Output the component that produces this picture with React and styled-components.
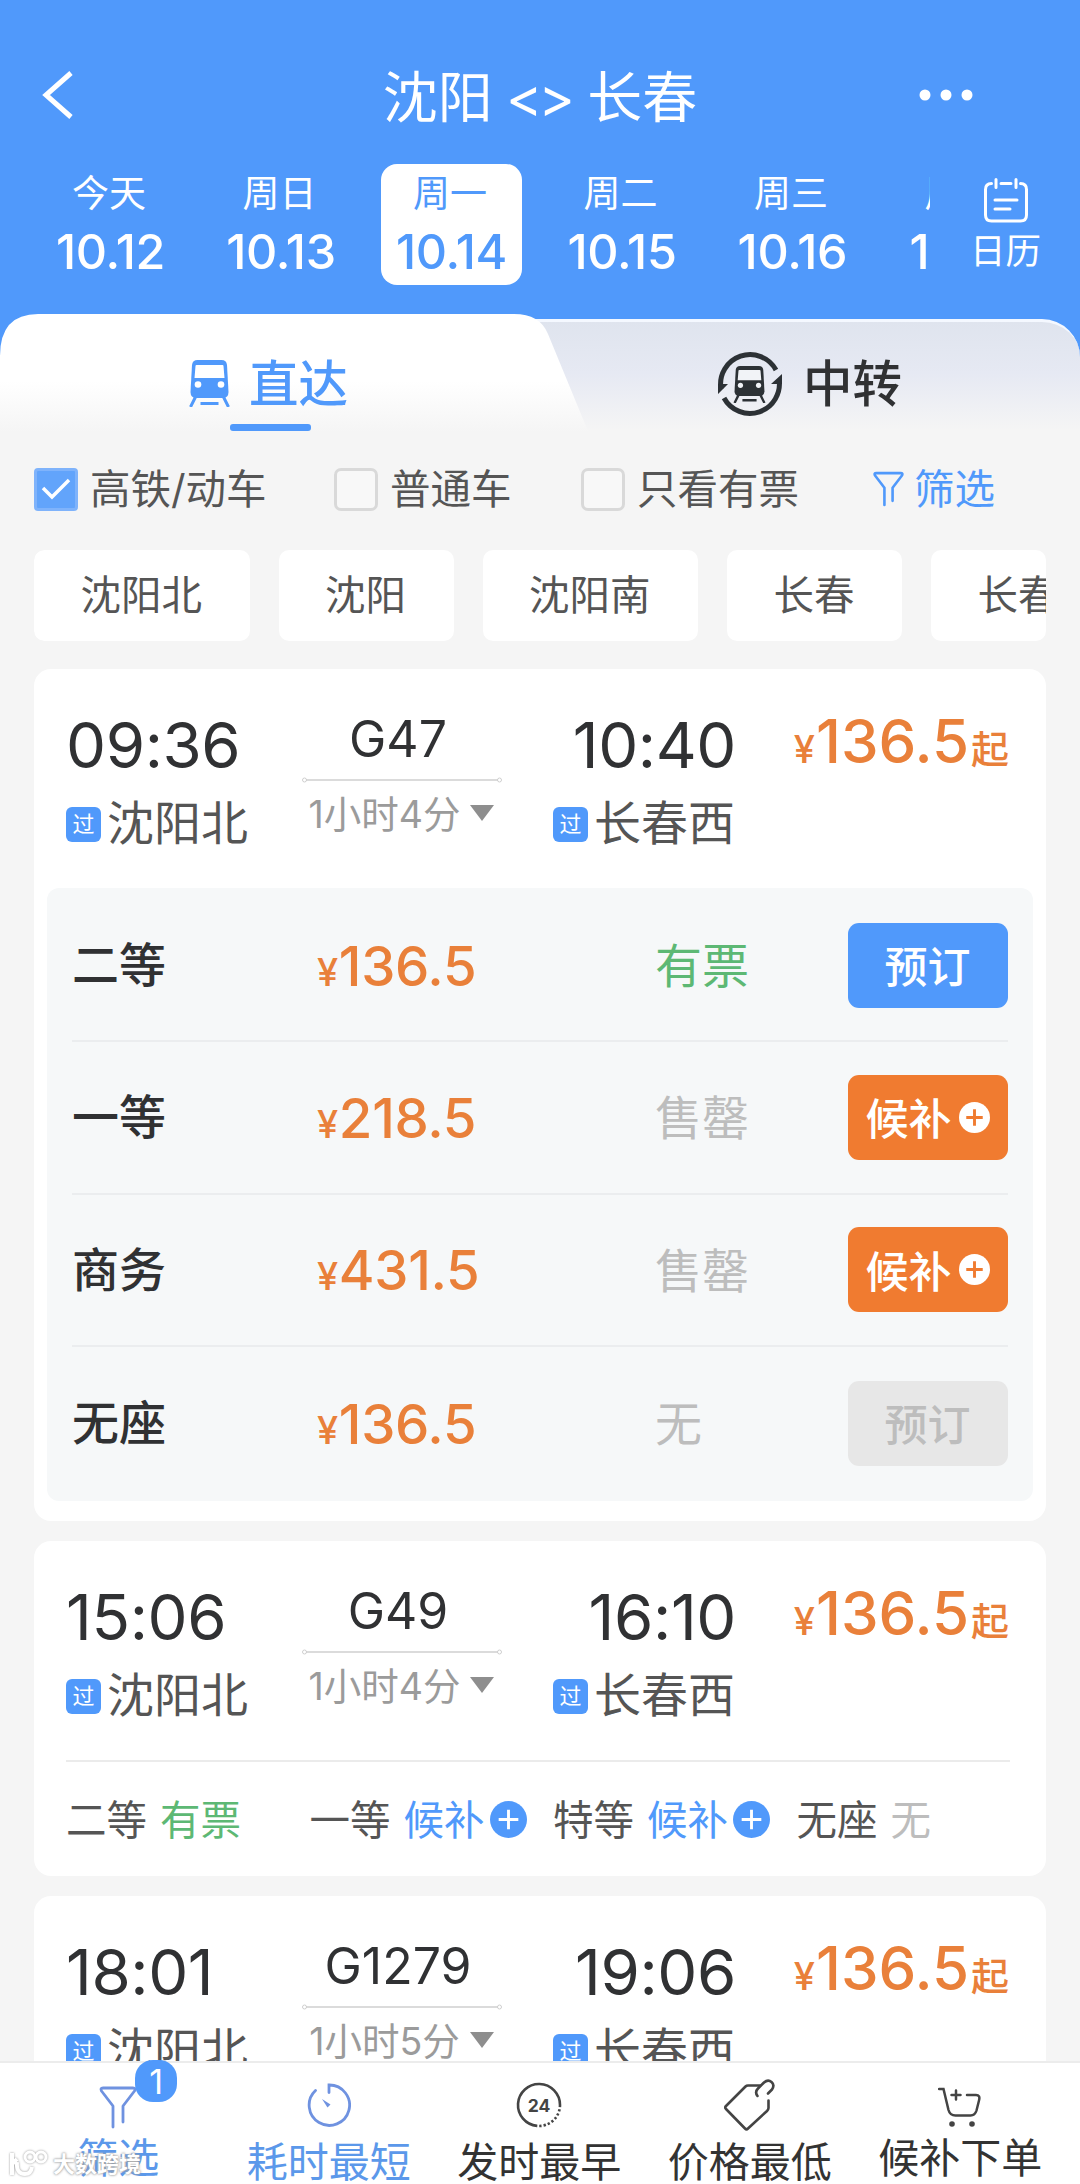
import { useState } from "react";
import styled, { createGlobalStyle, css } from "styled-components";

const GlobalStyle = createGlobalStyle`
  :root {
    --color-blue: #5099fb;
    --color-orange: #e9803a;
    --color-green: #5db874;
    --color-grey-50: #f5f5f5;
    --color-grey-300: #bdbdbd;
    --color-grey-400: #9b9b9b;
    --color-grey-600: #555;
    --color-grey-800: #303133;
  }

  * {
    box-sizing: border-box;
    margin: 0;
    padding: 0;
  }

  body {
    font-family: Inter, "Noto Sans CJK SC", sans-serif;
    background: var(--color-grey-50);
    color: var(--color-grey-800);
  }

  button {
    font: inherit;
    border: none;
    background: none;
    cursor: pointer;
  }
`;

const Screen = styled.div`
  display: flex;
  flex-direction: column;
  width: 1080px;
  height: 2184px;
  overflow: hidden;
  background: var(--color-grey-50);
`;

const Header = styled.header`
  flex: none;
  height: 314px;
  padding-top: 55px;
  background: var(--color-blue);
  color: #fff;
`;

const TitleBar = styled.div`
  display: grid;
  grid-template-columns: 200px 1fr 200px;
  align-items: center;
  height: 80px;
  padding: 0 42px;
`;

const Title = styled.h1`
  padding-top: 3px;
  font-size: 55px;
  font-weight: 400;
  line-height: 76px;
  text-align: center;
  white-space: pre;
`;

const Arrows = styled.span`
  letter-spacing: -4px;
  margin: 0 1px 0 -2px;
`;

const MoreIcon = styled.svg`
  justify-self: end;
  margin-right: 65px;
`;

const DateBar = styled.div`
  display: flex;
  margin-top: 29px;
`;

const DateStrip = styled.div`
  display: flex;
  gap: 29.5px;
  width: 930px;
  padding-left: 40px;
  overflow: hidden;
`;

const DateItem = styled.button`
  flex: none;
  width: 141px;
  height: 121px;
  padding-top: 2px;
  border-radius: 16px;
  color: ${(props) => (props.$active ? "var(--color-blue)" : "#fff")};
  background: ${(props) => (props.$active ? "#fff" : "transparent")};
`;

const Weekday = styled.div`
  margin-left: -3px;
  font-size: 37px;
  line-height: 52px;
`;

const Day = styled.div`
  margin: 0 -10px;
  font-size: 48.5px;
  font-weight: 500;
  line-height: 64px;
  letter-spacing: -0.3px;
`;

const Calendar = styled.button`
  flex: 1;
  display: flex;
  flex-direction: column;
  align-items: center;
  gap: 5px;
  padding: 14px 0 0 1px;
  color: #fff;
  font-size: 35.5px;
  line-height: 48px;
`;

const Tabs = styled.div`
  flex: none;
  display: flex;
  height: 122px;
  background: linear-gradient(var(--color-blue) 50px, var(--color-grey-50) 50px);
`;

const DirectTab = styled.div`
  position: relative;
  z-index: 1;
  flex: none;
  width: 600px;
  padding-top: 34px;
  background: linear-gradient(#fff 55%, var(--color-grey-50) 97%);
  color: var(--color-blue);
  clip-path: path(
    "M0 122 V42 Q0 0 38 0 H514 Q540 0 548 20 L590 122 Z"
  );

  &::after {
    content: "";
    display: block;
    width: 81px;
    height: 7px;
    margin: 5px 0 0 230px;
    border-radius: 3px;
    background: var(--color-blue);
  }
`;

const TransferTab = styled.div`
  flex: 1;
  margin: 5px 0 0 -80px;
  border-top: 3px solid #f4f8ff;
  border-radius: 0 38px 0 0;
  padding-top: 26px;
  background: linear-gradient(#dfe4ee, #e6e9f3 45%, var(--color-grey-50) 95%);
`;

const TabLabel = styled.div`
  display: flex;
  align-items: center;
  height: 71px;
  padding-left: ${(props) => props.$indent}px;
  gap: ${(props) => props.$gap}px;
  font-size: 49.5px;
  font-weight: 500;
`;

const TabText = styled.span`
  padding-bottom: 6px;
`;

const Filters = styled.div`
  flex: none;
  display: flex;
  align-items: center;
  height: 106px;
  padding-left: 34px;
  color: var(--color-grey-600);
  font-size: 40.5px;
`;

const FilterText = styled.span`
  padding-bottom: 5px;
`;

const Check = styled.label`
  display: flex;
  align-items: center;
  gap: 12px;
  width: ${(props) => props.$width}px;
  white-space: nowrap;
`;

const Box = styled.span`
  display: grid;
  place-items: center;
  width: 44px;
  height: 43px;
  border: 3px solid ${(props) => (props.$on ? "#7fb3fb" : "#d9d9d9")};
  border-radius: ${(props) => (props.$on ? 4 : 7)}px;
  background: ${(props) => (props.$on ? "#62a4fb" : "#f8f8f8")};
`;

const FilterLink = styled.button`
  display: flex;
  align-items: center;
  gap: 10px;
  color: var(--color-blue);
`;

const Chips = styled.div`
  flex: none;
  display: flex;
  gap: 29px;
  margin: 8px 34px 0;
  overflow: hidden;
  border-radius: 10px;
`;

const Chip = styled.button`
  flex: none;
  height: 91px;
  padding: 0 47.5px 0 46.5px;
  border-radius: 10px;
  background: #fff;
  color: var(--color-grey-600);
  font-size: 40.5px;
  line-height: 91px;
`;

const List = styled.main`
  flex: 1;
  min-height: 0;
  display: flex;
  flex-direction: column;
  gap: 20.5px;
  padding: 28px 34px 0;
  overflow: hidden;
`;

const Card = styled.article`
  flex: none;
  padding-bottom: ${(props) => (props.$open ? 19.5 : 0)}px;
  border-radius: 17px;
  background: #fff;
`;

const TripHead = styled.div`
  display: grid;
  grid-template-columns: 236px 200px 234px 1fr;
  height: 219px;
  padding: 36px 37px 0 32px;
`;

const Stop = styled.div`
  display: flex;
  flex-direction: column;
  align-items: ${(props) => (props.$end ? "flex-end" : "flex-start")};
`;

const Time = styled.div`
  font-size: 63.5px;
  font-weight: 425;
  line-height: 80px;
  letter-spacing: -0.4px;
`;

const Station = styled.div`
  display: flex;
  align-items: center;
  gap: 6px;
  height: 77px;
  padding-right: 1px;
  color: var(--color-grey-600);
  font-size: 47px;
`;

const StationName = styled.span`
  padding-bottom: 9px;
`;

const PassBadge = styled.span`
  width: 35px;
  height: 35px;
  margin-top: 1px;
  border-radius: 6px;
  background: var(--color-blue);
  color: #fff;
  font-size: 22px;
  line-height: 35px;
  text-align: center;
`;

const Middle = styled.div`
  display: flex;
  flex-direction: column;
  align-items: center;
`;

const TrainNo = styled.div`
  margin: 0 8px 2px 0;
  font-size: 50px;
  line-height: 69px;
`;

const Duration = styled.div`
  display: flex;
  align-items: center;
  gap: 10px;
  height: 46px;
  margin: 4px 1px 0 0;
  color: var(--color-grey-400);
  font-size: 37.5px;
  white-space: nowrap;
`;

const Triangle = styled.i`
  margin-top: 4px;
  border: 12px solid transparent;
  border-top: 16px solid #8e8e8e;
  border-bottom: 0;
`;

const FromPrice = styled.div`
  justify-self: end;
  color: var(--color-orange);
  font-size: 60px;
  font-weight: 500;
  line-height: 73px;
  white-space: nowrap;
`;

const Yen = styled.span`
  margin-right: 1px;
  font-size: 38px;
`;

const From = styled.span`
  margin-left: 2px;
  font-size: 38px;
`;

const SeatPanel = styled.div`
  margin: 0 13px;
  padding: 2px 25px;
  border-radius: 12px;
  background: #f6f8f9;
`;

const SeatRow = styled.div`
  display: grid;
  grid-template-columns: 245px 338px 1fr 160px;
  align-items: center;
  height: 152.3px;
  font-size: 47px;

  &:not(:last-child) {
    border-bottom: 2px solid #ebedef;
  }
`;

const SeatName = styled.div`
  font-weight: 500;
  padding-bottom: 7px;
`;

const SeatPrice = styled.div`
  padding-top: 1px;
  color: var(--color-orange);
  font-size: 54.5px;
  font-weight: 500;
  letter-spacing: -0.3px;
`;

const statusColors = {
  有票: "var(--color-green)",
  候补: "var(--color-blue)",
};

const Status = styled.span`
  padding-bottom: ${(props) => props.$raise || 0}px;
  color: ${(props) => statusColors[props.$status] || "var(--color-grey-300)"};
`;

const variations = {
  book: css`
    background: var(--color-blue);
    color: #fff;
  `,
  wait: css`
    background: #f07b30;
    color: #fff;
  `,
  disabled: css`
    background: #e7e7e7;
    color: var(--color-grey-300);
  `,
};

const SeatButton = styled.button`
  display: flex;
  align-items: center;
  justify-content: center;
  gap: 7px;
  height: 85px;
  padding-right: 1px;
  border-radius: 11px;
  font-size: 43px;
  font-weight: 500;
  ${(props) => variations[props.$variation]}
`;

const ButtonText = styled.span`
  padding-bottom: 2px;
`;

const Summary = styled.div`
  display: grid;
  grid-template-columns: repeat(4, 243.5px);
  align-items: center;
  height: 115.5px;
  margin: 0 36px 0 32px;
  border-top: 2px solid #ebebeb;
  font-size: 40.5px;
`;

const SummaryItem = styled.div`
  display: flex;
  align-items: center;
  gap: 13px;
  padding-bottom: 2px;
  color: var(--color-grey-600);
  white-space: nowrap;
`;

const PlusWrap = styled.span`
  display: flex;
  margin: 3px 0 0 -8px;
  color: var(--color-blue);
`;

const Footer = styled.footer`
  position: relative;
  flex: none;
  display: grid;
  grid-template-columns: repeat(5, 210.5px);
  height: 123px;
  padding-left: 13px;
  border-top: 2px solid #ececec;
  background: #fff;
`;

const SortItem = styled.button`
  display: flex;
  flex-direction: column;
  align-items: center;
  padding-top: 14px;
  color: ${(props) => (props.$active ? "#5b98ea" : "#333")};
  font-size: 41px;
  line-height: 50px;
  white-space: nowrap;
`;

const SortIcon = styled.span`
  position: relative;
  display: grid;
  place-items: center;
  height: 56px;
  padding-top: ${(props) => (props.$low ? 4 : 0)}px;
  color: ${(props) => (props.$active ? "#6f92e0" : "#444")};
`;

const SortLabel = styled.span`
  margin-top: ${(props) => (props.$low ? 0 : 4)}px;
`;

const Count = styled.span`
  position: absolute;
  top: -17px;
  left: 36px;
  width: 42px;
  height: 42px;
  border-radius: 18px;
  background: var(--color-blue);
  color: #fff;
  font-size: 34px;
  line-height: 43px;
  text-align: center;
`;

const Watermark = styled.div`
  position: absolute;
  left: 9px;
  bottom: 4px;
  display: flex;
  align-items: center;
  gap: 4px;
  color: #fff;
  font-size: 22px;
  font-weight: 700;
  line-height: 32px;
  text-shadow: 0 0 2px #999, 0 0 3px #aaa;

  svg {
    filter: drop-shadow(0 0 1px #999);
  }
`;

function Train({ width, height, hole }) {
  return (
    <svg width={width} height={height} viewBox="0 0 40 47">
      <path
        fill="currentColor"
        d="M8 0h24q5 0 5.500 5L39 32q0 6-6 6H7q-6 0-6-6L2.500 5Q3 0 8 0z"
      />
      <path fill={hole} d="M7 5h26q1 0 1 1l1 12H5L6 6q0-1 1-1z" />
      <circle cx="8.500" cy="24.500" r="3.300" fill={hole} />
      <circle cx="31.500" cy="24.500" r="3.300" fill={hole} />
      <path
        stroke="currentColor"
        strokeWidth="3"
        d="M6 37 1 47M34 37l5 10M11 43.500h18"
      />
    </svg>
  );
}

function TransferIcon() {
  return (
    <svg width="66" height="66" viewBox="0 0 66 66" color="#2c3135">
      <g fill="none" stroke="currentColor" strokeWidth="5">
        <path d="M4 38A29.500 29.500 0 0 1 59 19" />
        <path d="M62 28A29.500 29.500 0 0 1 7 47" />
      </g>
      <path fill="currentColor" d="M1 43V33l10 0zM65 23v10H54z" />
      <g transform="translate(16 15)">
        <Train width={33} height={37} hole="#f1f3f7" />
      </g>
    </svg>
  );
}

function Funnel({ width, height, stroke = 2.8 }) {
  return (
    <svg
      width={width}
      height={height}
      viewBox="0 0 38 43"
      fill="none"
      stroke="currentColor"
      strokeWidth={stroke}
      strokeLinecap="round"
      strokeLinejoin="round"
    >
      <path d="M14 41V20L2.500 5Q1 2 4 2h30q3 0 1.500 3L24 20v16" />
    </svg>
  );
}

function PlusCircle({ size, color, stroke = 2.5 }) {
  return (
    <svg width={size} height={size} viewBox="0 0 32 32">
      <circle cx="16" cy="16" r="16" fill="currentColor" />
      <path stroke={color} strokeWidth={stroke} d="M16 7.500v17M7.500 16h17" />
    </svg>
  );
}

function TimerIcon() {
  return (
    <svg width="44" height="44" viewBox="0 0 44 44" fill="none">
      <path
        stroke="currentColor"
        strokeWidth="2.800"
        strokeLinecap="round"
        d="M22 9.500V2A20.200 20.200 0 1 1 8.500 7.500"
      />
      <path fill="currentColor" d="m15 16 8.500 5.500-3 3z" />
    </svg>
  );
}

const Digits = styled.text`
  font-family: Inter, sans-serif;
  font-size: 17.5px;
  font-weight: 700;
`;

function DayIcon() {
  return (
    <svg width="46" height="46" viewBox="0 0 46 46">
      <g fill="none" stroke="currentColor" strokeWidth="2.600">
        <path d="M21 43.900A21 21 0 1 1 44 23" />
        <path strokeDasharray="2.300 2" d="M44 23A21 21 0 0 1 21 43.900" />
      </g>
      <Digits x="23" y="29.500" textAnchor="middle" fill="currentColor">
        24
      </Digits>
    </svg>
  );
}

function TagIcon() {
  return (
    <svg
      width="52"
      height="52"
      viewBox="0 0 52 52"
      fill="none"
      stroke="currentColor"
      strokeWidth="2.600"
      strokeLinecap="round"
      strokeLinejoin="round"
    >
      <path d="M36 6.500H24q-1.500 0-2.500 1L2 27q-1.500 1.500 0 3l19 19.500q1.500 1.500 3 0L43 32q1.500-1.500 1.500-3v-7.500" />
      <path d="M33.500 17q-3-4 .5-7.500l6-6q4-3.500 7.500-.5t.5 7.500l-4 4" />
    </svg>
  );
}

function CartIcon() {
  return (
    <svg
      width="44"
      height="41"
      viewBox="0 0 44 41"
      fill="none"
      stroke="currentColor"
      strokeWidth="2.500"
      strokeLinecap="round"
    >
      <path d="M1 2h4.500l5 21q1.500 5.500 7 5.500h15q4.500 0 6-5l2.500-10q1.500-5.500-3-5.500H29M18 3.500v9M13.500 8h9" />
      <g fill="currentColor" stroke="none">
        <circle cx="14" cy="37" r="2.800" />
        <circle cx="34" cy="37" r="2.800" />
      </g>
    </svg>
  );
}

function Route() {
  return (
    <svg width="202" height="8" viewBox="0 0 202 8" fill="none" stroke="#cfcfcf">
      <path strokeWidth="1.500" d="M5 4h192" />
      <circle cx="3.500" cy="4" r="2" />
      <circle cx="198.500" cy="4" r="2" />
    </svg>
  );
}

const dates = [
  ["今天", "10.12"],
  ["周日", "10.13"],
  ["周一", "10.14"],
  ["周二", "10.15"],
  ["周三", "10.16"],
  ["周四", "10.17"],
];

const stations = ["沈阳北", "沈阳", "沈阳南", "长春", "长春西"];

const trips = [
  {
    no: "G47",
    depart: "09:36",
    arrive: "10:40",
    duration: "1小时4分",
    seats: [
      { name: "二等", price: "136.5", status: "有票", action: "book" },
      { name: "一等", price: "218.5", status: "售罄", action: "wait" },
      { name: "商务", price: "431.5", status: "售罄", action: "wait" },
      { name: "无座", price: "136.5", status: "无", action: "disabled" },
    ],
  },
  {
    no: "G49",
    depart: "15:06",
    arrive: "16:10",
    duration: "1小时4分",
    summary: [
      ["二等", "有票"],
      ["一等", "候补"],
      ["特等", "候补"],
      ["无座", "无"],
    ],
  },
  {
    no: "G1279",
    depart: "18:01",
    arrive: "19:06",
    duration: "1小时5分",
  },
];

const sorts = [
  {
    label: "筛选",
    icon: <Funnel width={38} height={43} />,
    active: true,
    low: true,
    count: 1,
  },
  { label: "耗时最短", icon: <TimerIcon />, active: true },
  { label: "发时最早", icon: <DayIcon /> },
  { label: "价格最低", icon: <TagIcon /> },
  { label: "候补下单", icon: <CartIcon />, low: true },
];

function TripCard({ trip }) {
  const { no, depart, arrive, duration, seats, summary } = trip;

  return (
    <Card $open={Boolean(seats)}>
      <TripHead>
        <Stop>
          <Time>{depart}</Time>
          <Station>
            <PassBadge>过</PassBadge>
            <StationName>沈阳北</StationName>
          </Station>
        </Stop>
        <Middle>
          <TrainNo>{no}</TrainNo>
          <Route />
          <Duration>
            {duration}
            <Triangle />
          </Duration>
        </Middle>
        <Stop $end>
          <Time>{arrive}</Time>
          <Station>
            <PassBadge>过</PassBadge>
            <StationName>长春西</StationName>
          </Station>
        </Stop>
        <FromPrice>
          <Yen>¥</Yen>
          136.5
          <From>起</From>
        </FromPrice>
      </TripHead>

      {seats && (
        <SeatPanel>
          {seats.map((seat) => (
            <SeatRow key={seat.name}>
              <SeatName>{seat.name}</SeatName>
              <SeatPrice>
                <Yen>¥</Yen>
                {seat.price}
              </SeatPrice>
              <Status $status={seat.status} $raise={5}>
                {seat.status}
              </Status>
              <SeatButton $variation={seat.action}>
                <ButtonText>
                  {seat.action === "wait" ? "候补" : "预订"}
                </ButtonText>
                {seat.action === "wait" && (
                  <PlusCircle size={31} color="#f07b30" stroke={3} />
                )}
              </SeatButton>
            </SeatRow>
          ))}
        </SeatPanel>
      )}

      {summary && (
        <Summary>
          {summary.map(([name, status]) => (
            <SummaryItem key={name}>
              {name}
              <Status $status={status}>{status}</Status>
              {status === "候补" && (
                <PlusWrap>
                  <PlusCircle size={37} color="#fff" />
                </PlusWrap>
              )}
            </SummaryItem>
          ))}
        </Summary>
      )}
    </Card>
  );
}

function App() {
  const [active, setActive] = useState("10.14");

  return (
    <>
      <GlobalStyle />
      <Screen>
        <Header>
          <TitleBar>
            <svg width="32" height="48" viewBox="0 0 32 48" fill="none">
              <path stroke="#fff" strokeWidth="5" d="M29 2 4 24l25 22" />
            </svg>
            <Title>
              沈阳 <Arrows>{"<>"}</Arrows> 长春
            </Title>
            <MoreIcon width="54" height="12" viewBox="0 0 54 12" fill="#fff">
              <circle cx="6" cy="6" r="5.500" />
              <circle cx="27" cy="6" r="5.500" />
              <circle cx="48" cy="6" r="5.500" />
            </MoreIcon>
          </TitleBar>
          <DateBar>
            <DateStrip>
              {dates.map(([weekday, day]) => (
                <DateItem
                  key={day}
                  $active={day === active}
                  onClick={() => setActive(day)}
                >
                  <Weekday>{weekday}</Weekday>
                  <Day>{day}</Day>
                </DateItem>
              ))}
            </DateStrip>
            <Calendar>
              <svg
                width="44"
                height="45"
                viewBox="0 0 44 45"
                fill="none"
                stroke="#fff"
                strokeWidth="3"
                strokeLinecap="round"
              >
                <path d="M7.500 5.500q-6 0-6 6V37q0 6 6 6h29q6 0 6-6V11.500q0-6-6-6M17 5.500h10" />
                <path d="M12 1.500v8M32 1.500v8M11 22h22M11 31h15" />
              </svg>
              日历
            </Calendar>
          </DateBar>
        </Header>

        <Tabs>
          <DirectTab>
            <TabLabel $indent={189} $gap={19}>
              <Train width={41} height={47} hole="#fff" />
              <TabText>直达</TabText>
            </TabLabel>
          </DirectTab>
          <TransferTab>
            <TabLabel $indent={197} $gap={20}>
              <TransferIcon />
              <TabText>中转</TabText>
            </TabLabel>
          </TransferTab>
        </Tabs>

        <Filters>
          <Check $width={300}>
            <Box $on>
              <svg width="30" height="24" viewBox="0 0 30 24" fill="none">
                <path stroke="#fff" strokeWidth="3.500" d="m2 11 9 9L28 3" />
              </svg>
            </Box>
            <FilterText>高铁/动车</FilterText>
          </Check>
          <Check $width={247}>
            <Box />
            <FilterText>普通车</FilterText>
          </Check>
          <Check $width={292}>
            <Box />
            <FilterText>只看有票</FilterText>
          </Check>
          <FilterLink>
            <Funnel width={31} height={36} stroke={3.2} />
            <FilterText>筛选</FilterText>
          </FilterLink>
        </Filters>

        <Chips>
          {stations.map((station) => (
            <Chip key={station}>{station}</Chip>
          ))}
        </Chips>

        <List>
          {trips.map((trip) => (
            <TripCard key={trip.no} trip={trip} />
          ))}
        </List>

        <Footer>
          {sorts.map(({ label, icon, active, count, low }) => (
            <SortItem key={label} $active={active}>
              <SortIcon $active={active} $low={low}>
                {icon}
                {count && <Count>{count}</Count>}
              </SortIcon>
              <SortLabel $low={low}>{label}</SortLabel>
            </SortItem>
          ))}
          <Watermark>
            <svg
              width="40"
              height="28"
              viewBox="0 0 40 28"
              fill="none"
              stroke="#fff"
              strokeWidth="4"
            >
              <path d="M3 3v22M3 14l5-5M8 12q-1 12 8 12 6 0 7-7" />
              <circle cx="21" cy="7" r="5" strokeWidth="3" />
              <circle cx="32" cy="7" r="5" strokeWidth="3" />
            </svg>
            大数跨境
          </Watermark>
        </Footer>
      </Screen>
    </>
  );
}

export default App;
